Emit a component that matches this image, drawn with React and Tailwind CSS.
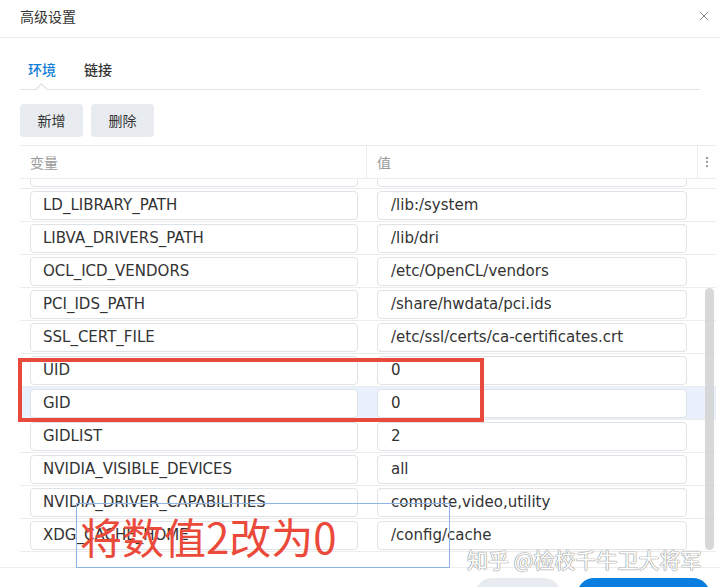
import React from "react";
import { X, EllipsisVertical } from "lucide-react";

const rows = [
  ["LD_LIBRARY_PATH", "/lib:/system"],
  ["LIBVA_DRIVERS_PATH", "/lib/dri"],
  ["OCL_ICD_VENDORS", "/etc/OpenCL/vendors"],
  ["PCI_IDS_PATH", "/share/hwdata/pci.ids"],
  ["SSL_CERT_FILE", "/etc/ssl/certs/ca-certificates.crt"],
  ["UID", "0"],
  ["GID", "0"],
  ["GIDLIST", "2"],
  ["NVIDIA_VISIBLE_DEVICES", "all"],
  ["NVIDIA_DRIVER_CAPABILITIES", "compute,video,utility"],
  ["XDG_CACHE_HOME", "/config/cache"],
];

function Row({ name, value, active, partial }) {
  return (
    <div
      className={
        "flex items-center h-[33px] border-b border-[#ececec] " +
        (active ? "bg-[#e8f1fc] " : "") +
        (partial ? "-mt-[23px]" : "")
      }
    >
      <div className="w-[347px] pl-[10px]">
        <div className="w-[328px] h-[29px] rounded-[4px] border border-[#dfe2e6] bg-white flex items-center px-[12px] text-[15px] text-[#333]">
          {name}
        </div>
      </div>
      <div className="pl-[10px]">
        <div className="w-[310px] h-[29px] rounded-[4px] border border-[#dfe2e6] bg-white flex items-center px-[13px] text-[15px] text-[#333]">
          {value}
        </div>
      </div>
    </div>
  );
}

export default function App() {
  return (
    <div
      className="relative w-[720px] h-[587px] overflow-hidden bg-white text-[#333]"
      style={{ fontFamily: '"DejaVu Sans", "Noto Sans CJK SC", sans-serif' }}
    >
      {/* title bar */}
      <div className="flex items-center justify-between h-[38px] border-b border-[#ececec] pl-[20px] pr-[8px] pb-[5px]">
        <span className="text-[14px] text-[#333]" style={{ fontFamily: '"Noto Sans CJK SC", sans-serif' }}>
          高级设置
        </span>
        <X size={16} strokeWidth={1.5} className="text-[#8a8a8a]" />
      </div>

      {/* tabs */}
      <div className="mx-[20px] mt-[19px] h-[33px] border-b border-[#e3e3e3] flex items-start gap-[28px] pl-[8px] relative" style={{ fontFamily: '"Noto Sans CJK SC", sans-serif' }}>
        <span className="text-[14px] font-medium text-[#0b7bd7] leading-[24px]">环境</span>
        <span className="text-[14px] font-medium text-[#333] leading-[24px]">链接</span>
        <span className="absolute left-[17px] bottom-[-5px] w-[9px] h-[9px] rotate-45 bg-white border-l border-t border-[#d8d8d8]"></span>
      </div>

      {/* toolbar */}
      <div className="flex gap-[8px] px-[20px] mt-[14px]" style={{ fontFamily: '"Noto Sans CJK SC", sans-serif' }}>
        <button className="w-[63px] h-[33px] rounded-[4px] bg-[#e8ecf0] text-[14px] text-[#333]">新增</button>
        <button className="w-[63px] h-[33px] rounded-[4px] bg-[#e8ecf0] text-[14px] text-[#333]">删除</button>
      </div>

      {/* table */}
      <div className="ml-[20px] mr-[4px] mt-[8px]">
        <div className="flex h-[34px] border-t border-b border-[#ececec] text-[14px] text-[#9a9a9a]" style={{ fontFamily: '"Noto Sans CJK SC", sans-serif' }}>
          <div className="w-[347px] pl-[10px] flex items-center border-r border-[#ececec]">变量</div>
          <div className="w-[331px] pl-[10px] flex items-center border-r border-[#ececec]">值</div>
          <div className="flex-1 flex items-center justify-center">
            <EllipsisVertical size={14} className="text-[#9a9a9a]" />
          </div>
        </div>
        <div className="h-[373px] overflow-hidden border-b border-[#ececec]">
          <Row name="" value="" partial />
          {rows.map(([n, v]) => (
            <Row key={n} name={n} value={v} active={n === "GID"} />
          ))}
        </div>
      </div>

      {/* footer */}
      <div className="mt-[15px] border-t border-[#ececec] flex justify-end gap-[16px] pr-[10px] pt-[10px]">
        <div className="w-[86px] h-[34px] rounded-full bg-[#e8ecf0]"></div>
        <div className="w-[133px] h-[34px] rounded-full bg-[#0b7fe0]"></div>
      </div>

      {/* scrollbar */}
      <div className="absolute left-[705px] top-[288px] w-[9px] h-[262px] rounded-full bg-[#d4d4d4] opacity-90"></div>

      {/* annotations */}
      <div className="absolute left-[18px] top-[358px] w-[466px] h-[64px] border-[4px] border-[#e9493b]"></div>
      <div className="absolute left-[76px] top-[503px] w-[374px] h-[65px] border border-[#8fb3e2] flex items-center pl-[3px]">
        <span className="text-[42px] leading-none text-[#eb4a3b]" style={{ fontFamily: '"Noto Sans CJK SC", sans-serif' }}>
          将数值2改为0
        </span>
      </div>
      <div
        className="absolute left-[467px] top-[546px] text-[21px] leading-[26px] text-white whitespace-nowrap"
        style={{
          fontFamily: '"Noto Sans CJK SC", sans-serif',
          textShadow: "0 0 1px #8c8c8c, 0 0 1px #8c8c8c, 0 0 1px #8c8c8c",
        }}
      >
        知乎 @检校千牛卫大将军
      </div>
    </div>
  );
}
